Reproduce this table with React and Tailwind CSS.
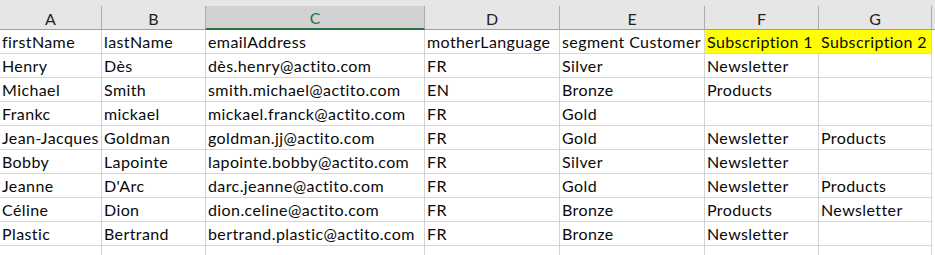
const cols = [
  { label: "A", w: "w-[102px]" },
  { label: "B", w: "w-[104px]" },
  { label: "C", w: "w-[219px]", selected: true },
  { label: "D", w: "w-[135px]" },
  { label: "E", w: "w-[145px]" },
  { label: "F", w: "w-[114px]" },
  { label: "G", w: "w-[113px]" },
];

const rows = [
  ["firstName", "lastName", "emailAddress", "motherLanguage", "segment Customer", "Subscription 1", "Subscription 2"],
  ["Henry", "Dès", "dès.henry@actito.com", "FR", "Silver", "Newsletter", ""],
  ["Michael", "Smith", "smith.michael@actito.com", "EN", "Bronze", "Products", ""],
  ["Frankc", "mickael", "mickael.franck@actito.com", "FR", "Gold", "", ""],
  ["Jean-Jacques", "Goldman", "goldman.jj@actito.com", "FR", "Gold", "Newsletter", "Products"],
  ["Bobby", "Lapointe", "lapointe.bobby@actito.com", "FR", "Silver", "Newsletter", ""],
  ["Jeanne", "D'Arc", "darc.jeanne@actito.com", "FR", "Gold", "Newsletter", "Products"],
  ["Céline", "Dion", "dion.celine@actito.com", "FR", "Bronze", "Products", "Newsletter"],
  ["Plastic", "Bertrand", "bertrand.plastic@actito.com", "FR", "Bronze", "Newsletter", ""],
  ["", "", "", "", "", "", ""],
];

function HeaderCell({ col }) {
  if (col.selected) {
    return (
      <div className={`${col.w} shrink-0 h-[24px] flex items-center justify-center pt-[2px] bg-[#d2d2d2] border-r border-[#ababab] border-b-2 border-b-[#217346] text-[#217346]`}>
        {col.label}
      </div>
    );
  }
  return (
    <div className={`${col.w} shrink-0 h-[24px] flex items-center justify-center pt-[2px] border-r border-[#ababab] border-b border-b-[#9e9e9e] text-[#222222]`}>
      {col.label}
    </div>
  );
}

export default function App() {
  return (
    <div className="w-[935px] h-[255px] overflow-hidden bg-white text-[16px] font-['Lato',sans-serif]">
      <div className="bg-[#e6e6e6]">
        <div className="h-[6px]" />
        <div className="flex">
          {cols.map((c) => (
            <HeaderCell key={c.label} col={c} />
          ))}
          <div className="flex-1 h-[24px] border-b border-b-[#9e9e9e]" />
        </div>
      </div>

      {rows.map((row, i) => (
        <div key={i} className="flex">
          {row.map((text, j) => {
            const yellow = i === 0 && j >= 5;
            return (
              <div
                key={j}
                className={`${cols[j].w} shrink-0 h-[24px] border-b border-r border-[#d4d4d4] pl-[2px] flex items-end pb-[2px] leading-[18px] tracking-[0.4px] whitespace-nowrap overflow-visible text-[#0a0a0a] ${
                  yellow ? "bg-[#ffff00]" : ""
                } ${i === 0 && j === 5 ? "border-r-[#ffff00]" : ""}`}
              >
                {text}
              </div>
            );
          })}
        </div>
      ))}
    </div>
  );
}
